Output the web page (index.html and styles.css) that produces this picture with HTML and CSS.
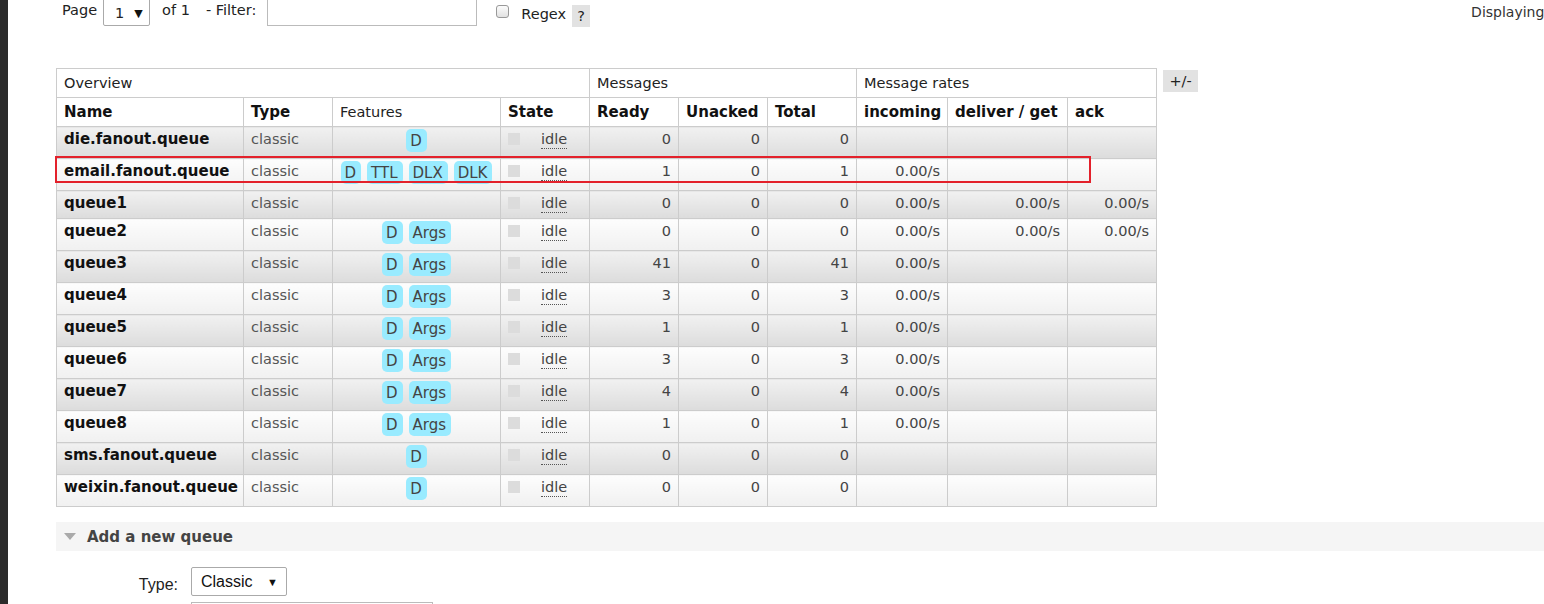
FILE: index.html
```html
<!DOCTYPE html>
<html>
<head>
<meta charset="utf-8">
<link rel="stylesheet" href="styles.css">
</head>
<body>
<div class="frame">
  <div class="strip"></div>
  <div class="page">
    <div class="topbar">
      <span class="lbl">Page</span>
      <div class="pselect"><span>1</span><span class="arrow">▼</span></div>
      <span class="lbl of">of 1</span>
      <span class="lbl filter">- Filter:</span>
      <div class="finput"></div>
      <span class="chk"></span>
      <span class="lbl regex">Regex</span>
      <span class="help">?</span>
      <span class="lbl displaying">Displaying</span>
    </div>

    <div class="tablerow">
      <div class="tablewrap">
        <table class="list">
          <colgroup>
            <col class="c-name"><col class="c-type"><col class="c-feat"><col class="c-state">
            <col class="c-num"><col class="c-num"><col class="c-num">
            <col class="c-inc"><col class="c-del"><col class="c-ack">
          </colgroup>
          <thead>
            <tr class="grp">
              <th colspan="4">Overview</th>
              <th colspan="3">Messages</th>
              <th colspan="3">Message rates</th>
            </tr>
            <tr class="hdr">
              <th>Name</th><th>Type</th><th class="normal">Features</th><th>State</th>
              <th>Ready</th><th>Unacked</th><th>Total</th>
              <th>incoming</th><th>deliver / get</th><th>ack</th>
            </tr>
          </thead>
          <tbody>
            <tr class="alt1">
              <td class="name">die.fanout.queue</td><td class="type">classic</td>
              <td class="feat"><div class="badges"><span class="badge">D</span></div></td>
              <td class="state"><span class="sq"></span><span class="idle">idle</span></td>
              <td class="r">0</td><td class="r">0</td><td class="r">0</td>
              <td class="r"></td><td class="r"></td><td class="r"></td>
            </tr>
            <tr class="alt2">
              <td class="name">email.fanout.queue</td><td class="type">classic</td>
              <td class="feat"><div class="badges"><span class="badge">D</span><span class="badge">TTL</span><span class="badge">DLX</span><span class="badge">DLK</span></div></td>
              <td class="state"><span class="sq"></span><span class="idle">idle</span></td>
              <td class="r">1</td><td class="r">0</td><td class="r">1</td>
              <td class="r">0.00/s</td><td class="r"></td><td class="r"></td>
            </tr>
            <tr class="alt1">
              <td class="name">queue1</td><td class="type">classic</td>
              <td class="feat"></td>
              <td class="state"><span class="sq"></span><span class="idle">idle</span></td>
              <td class="r">0</td><td class="r">0</td><td class="r">0</td>
              <td class="r">0.00/s</td><td class="r">0.00/s</td><td class="r">0.00/s</td>
            </tr>
            <tr class="alt2">
              <td class="name">queue2</td><td class="type">classic</td>
              <td class="feat"><div class="badges"><span class="badge">D</span><span class="badge">Args</span></div></td>
              <td class="state"><span class="sq"></span><span class="idle">idle</span></td>
              <td class="r">0</td><td class="r">0</td><td class="r">0</td>
              <td class="r">0.00/s</td><td class="r">0.00/s</td><td class="r">0.00/s</td>
            </tr>
            <tr class="alt1">
              <td class="name">queue3</td><td class="type">classic</td>
              <td class="feat"><div class="badges"><span class="badge">D</span><span class="badge">Args</span></div></td>
              <td class="state"><span class="sq"></span><span class="idle">idle</span></td>
              <td class="r">41</td><td class="r">0</td><td class="r">41</td>
              <td class="r">0.00/s</td><td class="r"></td><td class="r"></td>
            </tr>
            <tr class="alt2">
              <td class="name">queue4</td><td class="type">classic</td>
              <td class="feat"><div class="badges"><span class="badge">D</span><span class="badge">Args</span></div></td>
              <td class="state"><span class="sq"></span><span class="idle">idle</span></td>
              <td class="r">3</td><td class="r">0</td><td class="r">3</td>
              <td class="r">0.00/s</td><td class="r"></td><td class="r"></td>
            </tr>
            <tr class="alt1">
              <td class="name">queue5</td><td class="type">classic</td>
              <td class="feat"><div class="badges"><span class="badge">D</span><span class="badge">Args</span></div></td>
              <td class="state"><span class="sq"></span><span class="idle">idle</span></td>
              <td class="r">1</td><td class="r">0</td><td class="r">1</td>
              <td class="r">0.00/s</td><td class="r"></td><td class="r"></td>
            </tr>
            <tr class="alt2">
              <td class="name">queue6</td><td class="type">classic</td>
              <td class="feat"><div class="badges"><span class="badge">D</span><span class="badge">Args</span></div></td>
              <td class="state"><span class="sq"></span><span class="idle">idle</span></td>
              <td class="r">3</td><td class="r">0</td><td class="r">3</td>
              <td class="r">0.00/s</td><td class="r"></td><td class="r"></td>
            </tr>
            <tr class="alt1">
              <td class="name">queue7</td><td class="type">classic</td>
              <td class="feat"><div class="badges"><span class="badge">D</span><span class="badge">Args</span></div></td>
              <td class="state"><span class="sq"></span><span class="idle">idle</span></td>
              <td class="r">4</td><td class="r">0</td><td class="r">4</td>
              <td class="r">0.00/s</td><td class="r"></td><td class="r"></td>
            </tr>
            <tr class="alt2">
              <td class="name">queue8</td><td class="type">classic</td>
              <td class="feat"><div class="badges"><span class="badge">D</span><span class="badge">Args</span></div></td>
              <td class="state"><span class="sq"></span><span class="idle">idle</span></td>
              <td class="r">1</td><td class="r">0</td><td class="r">1</td>
              <td class="r">0.00/s</td><td class="r"></td><td class="r"></td>
            </tr>
            <tr class="alt1">
              <td class="name">sms.fanout.queue</td><td class="type">classic</td>
              <td class="feat"><div class="badges"><span class="badge">D</span></div></td>
              <td class="state"><span class="sq"></span><span class="idle">idle</span></td>
              <td class="r">0</td><td class="r">0</td><td class="r">0</td>
              <td class="r"></td><td class="r"></td><td class="r"></td>
            </tr>
            <tr class="alt2">
              <td class="name">weixin.fanout.queue</td><td class="type">classic</td>
              <td class="feat"><div class="badges"><span class="badge">D</span></div></td>
              <td class="state"><span class="sq"></span><span class="idle">idle</span></td>
              <td class="r">0</td><td class="r">0</td><td class="r">0</td>
              <td class="r"></td><td class="r"></td><td class="r"></td>
            </tr>
          </tbody>
        </table>
        <div class="mark"></div>
      </div>
      <span class="plusminus">+/-</span>
    </div>

    <div class="section">
      <span class="tri"></span>
      <span class="section-title">Add a new queue</span>
    </div>

    <div class="form">
      <span class="flabel">Type:</span>
      <div class="tselect"><span>Classic</span><span class="arrow">▼</span></div>
      <span></span>
      <div class="nextinput"></div>
    </div>
  </div>
</div>
</body>
</html>
```

FILE: styles.css
```css
html, body {
  margin: 0;
  padding: 0;
  height: 100%;
  overflow: hidden;
  background: #fff;
}
body {
  font-family: "DejaVu Sans", Verdana, sans-serif;
  font-size: 14.5px;
  color: #222;
}
.frame {
  display: flex;
  height: 604px;
}
.strip {
  width: 8px;
  flex: 0 0 8px;
  background: #2b2b2b;
}
.page {
  flex: 1;
  padding-left: 48px;
  min-width: 0;
}

/* top bar */
.topbar {
  display: flex;
  align-items: center;
  height: 32px;
  margin-top: -6px;
  padding-left: 6px;
  white-space: nowrap;
}
.topbar > * {
  flex-shrink: 0;
}
.lbl {
  color: #222;
}
.pselect {
  margin-left: 6px;
  width: 47px;
  height: 32px;
  box-sizing: border-box;
  border: 1px solid #aaa;
  border-radius: 2px;
  display: flex;
  align-items: center;
  padding: 6px 0 0 11px;
  gap: 10px;
  background: #fff;
}
.arrow {
  font-size: 11px;
  color: #111;
}
.of { margin-left: 12px; }
.filter { margin-left: 16px; }
.finput {
  margin-left: 11px;
  width: 210px;
  height: 31px;
  box-sizing: border-box;
  border: 1px solid #bbb;
  background: #fff;
}
.chk {
  margin-left: 19px;
  width: 11px;
  height: 11px;
  border: 1px solid #999;
  border-radius: 3px;
  background: linear-gradient(#fcfcfc, #e2e2e2);
  margin-top: 2px;
}
.regex {
  margin-left: 12px;
  margin-top: 8px;
}
.help {
  margin-left: 6px;
  margin-top: 12px;
  width: 18px;
  height: 22px;
  line-height: 22px;
  text-align: center;
  background: #e2e2e2;
  color: #222;
}
.displaying {
  margin-left: 881px;
  margin-top: 4px;
  color: #333;
  font-size: 14px;
}

/* table */
.tablerow {
  display: flex;
  align-items: flex-start;
  margin-top: 42px;
}
.tablewrap {
  position: relative;
}
table.list {
  border-collapse: collapse;
  table-layout: fixed;
  width: 1101px;
}
col.c-name { width: 187px; }
col.c-type { width: 89px; }
col.c-feat { width: 168px; }
col.c-state { width: 89px; }
col.c-num { width: 89px; }
col.c-inc { width: 91px; }
col.c-del { width: 120px; }
col.c-ack { width: 89px; }

table.list th,
table.list td {
  border: 1px solid #ccc;
  padding: 0 7px;
  line-height: 20px;
  vertical-align: top;
  white-space: nowrap;
  overflow: hidden;
}
table.list th {
  text-align: left;
  padding-top: 4px;
  padding-bottom: 4px;
  background: #fff;
  color: #222;
}
tr.grp th {
  font-weight: normal;
}
tr.hdr th {
  font-weight: bold;
  font-size: 15px;
  color: #111;
}
tr.hdr th.normal {
  font-weight: normal;
  font-size: 14.5px;
  color: #222;
}
table.list td {
  padding-top: 2px;
  padding-bottom: 5px;
  color: #444;
}
tr.alt1 td {
  background: linear-gradient(#f1f1f1, #dcdcdc);
}
tr.alt2 td {
  background: linear-gradient(#fdfdfd, #f0f0f0);
}
table.list td.name {
  font-weight: bold;
  font-size: 15px;
  color: #111;
}
table.list td.type {
  color: #555;
}
td.r {
  text-align: right;
}
td.feat {
  padding-left: 0;
  padding-right: 0;
}
.badges {
  display: flex;
  justify-content: center;
  gap: 6px;
  height: 24px;
}
.badge {
  display: inline-block;
  height: 23px;
  line-height: 24px;
  padding: 0 5px 0 4px;
  border-radius: 5px;
  background: #99ebff;
  color: #444;
  font-size: 15px;
}
td.state {
  padding-left: 7px;
}
.sq {
  display: inline-block;
  width: 12px;
  height: 12px;
  background: #dcdcdc;
  vertical-align: top;
  margin-top: 4px;
  margin-right: 21px;
}
.idle {
  color: #444;
  border-bottom: 1px dotted #555;
  line-height: 18px;
  display: inline-block;
}
.mark {
  position: absolute;
  left: -1px;
  top: 88px;
  width: 1032px;
  height: 23px;
  border: 2px solid #e3212b;
}
.plusminus {
  margin-left: 6px;
  margin-top: 2px;
  width: 35px;
  height: 22px;
  line-height: 22px;
  text-align: center;
  background: #e2e2e2;
  color: #222;
}

/* add queue section */
.section {
  margin-top: 15px;
  height: 29px;
  background: #f5f5f5;
  display: flex;
  align-items: center;
  padding-left: 8px;
}
.tri {
  width: 0;
  height: 0;
  border-left: 6px solid transparent;
  border-right: 6px solid transparent;
  border-top: 7px solid #aaa;
  margin-right: 11px;
}
.section-title {
  font-weight: bold;
  color: #444;
  font-size: 15px;
}

.form {
  display: grid;
  grid-template-columns: 122px auto;
  column-gap: 13px;
  row-gap: 6px;
  margin-top: 16px;
  align-items: start;
}
.flabel {
  text-align: right;
  padding-top: 9px;
  font-family: "Liberation Sans", Arial, sans-serif;
  font-size: 16px;
  color: #222;
}
.tselect {
  width: 96px;
  height: 29px;
  box-sizing: border-box;
  border: 1px solid #aaa;
  border-radius: 2px;
  display: flex;
  align-items: center;
  justify-content: space-between;
  padding: 0 8px 0 9px;
  font-family: "Liberation Sans", Arial, sans-serif;
  font-size: 16px;
  color: #111;
}
.nextinput {
  width: 240px;
  height: 30px;
  border: 1px solid #bbb;
}
```
